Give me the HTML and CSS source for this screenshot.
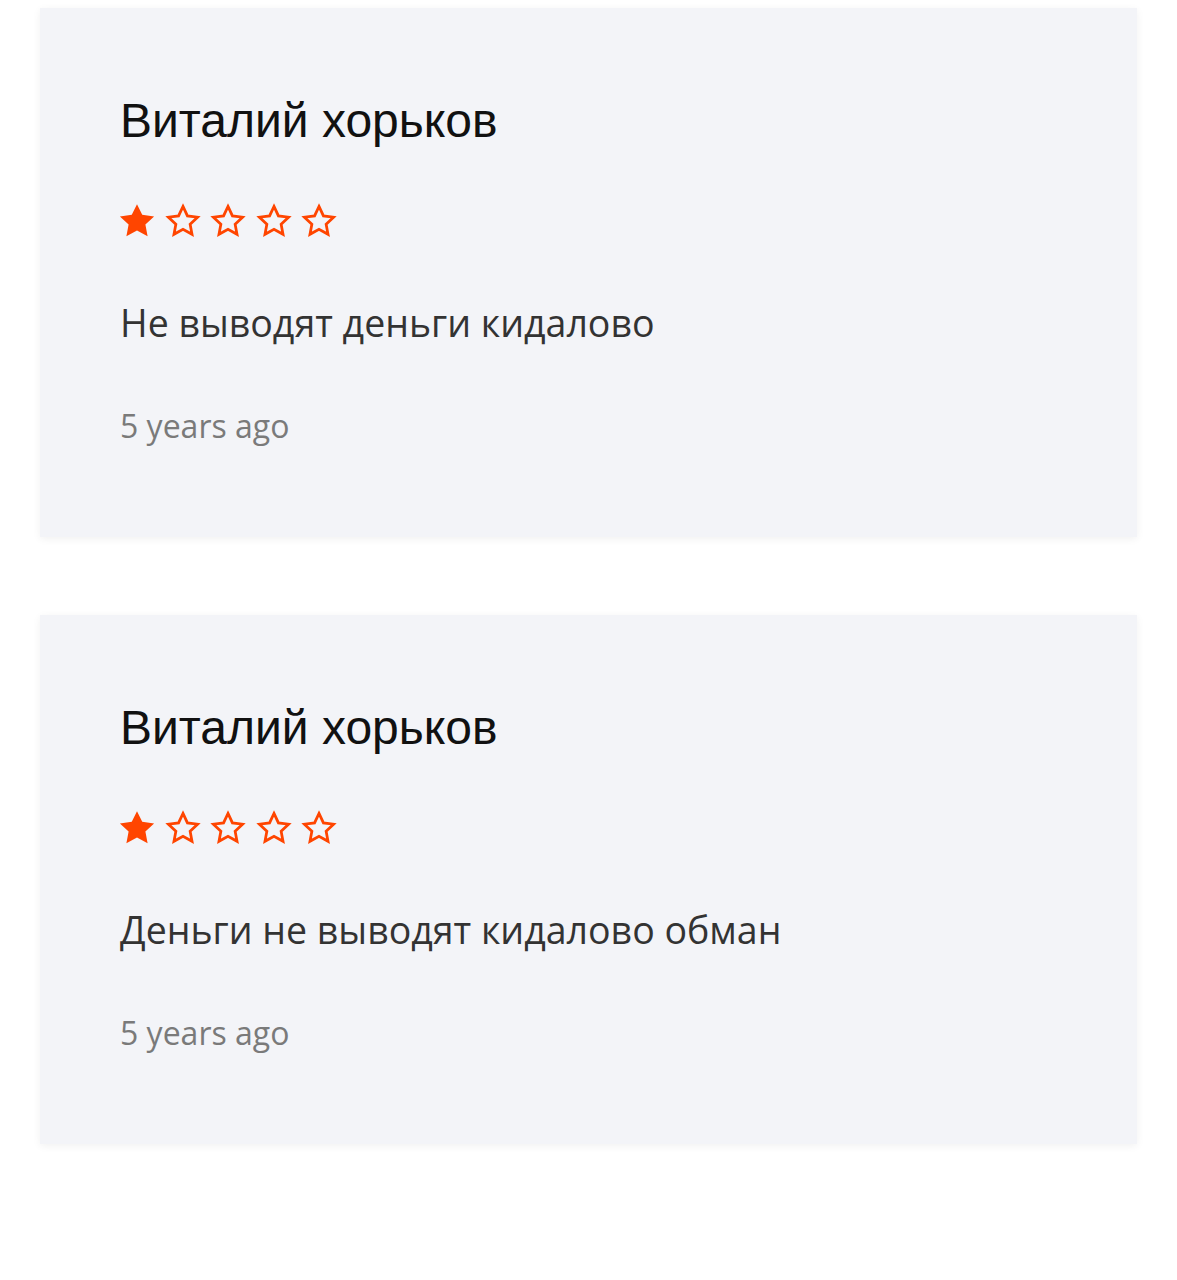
FILE: index.html
```html
<!DOCTYPE html>
<html lang="ru">
<head>
<meta charset="utf-8">
<link rel="stylesheet" href="styles.css">
</head>
<body>
<div class="list">
  <div class="card">
    <div class="name">Виталий хорьков</div>
    <div class="stars">
      <svg class="star" viewBox="0 0 24 24"><polygon class="full" points="12,1.4 15.3,8.1 22.8,9.1 17.3,14.2 18.7,21.6 12,18 5.3,21.6 6.7,14.2 1.2,9.1 8.7,8.1"/></svg>
      <svg class="star" viewBox="0 0 24 24"><polygon class="empty" points="12,2.8 14.8,8.8 21.2,9.6 16.5,14 17.7,20.4 12,17.2 6.3,20.4 7.5,14 2.8,9.6 9.2,8.8"/></svg>
      <svg class="star" viewBox="0 0 24 24"><polygon class="empty" points="12,2.8 14.8,8.8 21.2,9.6 16.5,14 17.7,20.4 12,17.2 6.3,20.4 7.5,14 2.8,9.6 9.2,8.8"/></svg>
      <svg class="star" viewBox="0 0 24 24"><polygon class="empty" points="12,2.8 14.8,8.8 21.2,9.6 16.5,14 17.7,20.4 12,17.2 6.3,20.4 7.5,14 2.8,9.6 9.2,8.8"/></svg>
      <svg class="star" viewBox="0 0 24 24"><polygon class="empty" points="12,2.8 14.8,8.8 21.2,9.6 16.5,14 17.7,20.4 12,17.2 6.3,20.4 7.5,14 2.8,9.6 9.2,8.8"/></svg>
    </div>
    <div class="text">Не выводят деньги кидалово</div>
    <div class="date">5 years ago</div>
  </div>
  <div class="card">
    <div class="name">Виталий хорьков</div>
    <div class="stars">
      <svg class="star" viewBox="0 0 24 24"><polygon class="full" points="12,1.4 15.3,8.1 22.8,9.1 17.3,14.2 18.7,21.6 12,18 5.3,21.6 6.7,14.2 1.2,9.1 8.7,8.1"/></svg>
      <svg class="star" viewBox="0 0 24 24"><polygon class="empty" points="12,2.8 14.8,8.8 21.2,9.6 16.5,14 17.7,20.4 12,17.2 6.3,20.4 7.5,14 2.8,9.6 9.2,8.8"/></svg>
      <svg class="star" viewBox="0 0 24 24"><polygon class="empty" points="12,2.8 14.8,8.8 21.2,9.6 16.5,14 17.7,20.4 12,17.2 6.3,20.4 7.5,14 2.8,9.6 9.2,8.8"/></svg>
      <svg class="star" viewBox="0 0 24 24"><polygon class="empty" points="12,2.8 14.8,8.8 21.2,9.6 16.5,14 17.7,20.4 12,17.2 6.3,20.4 7.5,14 2.8,9.6 9.2,8.8"/></svg>
      <svg class="star" viewBox="0 0 24 24"><polygon class="empty" points="12,2.8 14.8,8.8 21.2,9.6 16.5,14 17.7,20.4 12,17.2 6.3,20.4 7.5,14 2.8,9.6 9.2,8.8"/></svg>
    </div>
    <div class="text">Деньги не выводят кидалово обман</div>
    <div class="date">5 years ago</div>
  </div>
</div>
</body>
</html>
```
FILE: styles.css
```css
html, body {
  margin: 0;
  padding: 0;
  background: #ffffff;
}
.list {
  padding: 8px 40px;
  display: flex;
  flex-direction: column;
  gap: 78px;
}
.card {
  background: #f3f4f8;
  box-shadow: 0 2px 8px rgba(0, 0, 0, 0.06);
  height: 529px;
  box-sizing: border-box;
  padding: 88px 80px 0 80px;
}
.name {
  font-family: "Liberation Sans", Arial, sans-serif;
  font-size: 48px;
  line-height: 50px;
  color: #111111;
}
.stars {
  display: flex;
  gap: 7.5px;
  margin-top: 56px;
  margin-left: -2px;
  height: 38px;
}
.star {
  width: 38px;
  height: 38px;
}
.full {
  fill: #ff4500;
}
.empty {
  fill: none;
  stroke: #ff4500;
  stroke-width: 1.75;
  stroke-linejoin: miter;
}
.text {
  font-family: "Open Sans", sans-serif;
  font-size: 37.5px;
  line-height: 46px;
  color: #333333;
  margin-top: 60px;
}
.date {
  font-family: "Open Sans", sans-serif;
  font-size: 32px;
  line-height: 40px;
  color: #7a7a7a;
  margin-top: 60px;
}
```
